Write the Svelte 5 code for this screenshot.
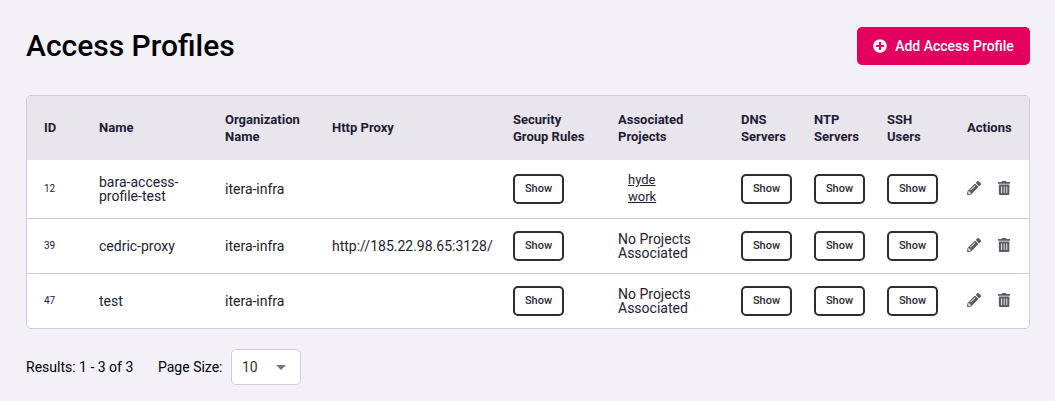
<script>
  const headers = [
    ['ID'],
    ['Name'],
    ['Organization', 'Name'],
    ['Http Proxy'],
    ['Security', 'Group Rules'],
    ['Associated', 'Projects'],
    ['DNS', 'Servers'],
    ['NTP', 'Servers'],
    ['SSH', 'Users'],
    ['Actions'],
  ];
  const rows = [
    { id: 12, name: 'bara-access-profile-test', org: 'itera-infra', proxy: '', projects: ['hyde', 'work'] },
    { id: 39, name: 'cedric-proxy', org: 'itera-infra', proxy: 'http://185.22.98.65:3128/', projects: [] },
    { id: 47, name: 'test', org: 'itera-infra', proxy: '', projects: [] },
  ];
</script>

<main>
  <header>
    <h1>Access Profiles</h1>
    <button class="add">
      <svg width="14" height="14" viewBox="0 0 512 512"><path fill="currentColor" d="M256 8C119 8 8 119 8 256s111 248 248 248 248-111 248-248S393 8 256 8zm144 276c0 6.600-5.400 12-12 12h-92v92c0 6.600-5.400 12-12 12h-56c-6.600 0-12-5.400-12-12v-92h-92c-6.600 0-12-5.400-12-12v-56c0-6.600 5.400-12 12-12h92v-92c0-6.600 5.400-12 12-12h56c6.600 0 12 5.400 12 12v92h92c6.600 0 12 5.400 12 12v56z" /></svg>
      <span>Add Access Profile</span>
    </button>
  </header>

  <section class="table">
    <div class="row head">
      {#each headers as lines}
        <div class:single={lines.length === 1}>{#each lines as line}<span class="line">{line}</span>{/each}</div>
      {/each}
    </div>
    {#each rows as row}
      <div class="row body">
        <div class="id">{row.id}</div>
        <div class="name">{row.name}</div>
        <div>{row.org}</div>
        <div>{row.proxy}</div>
        <div><button class="show">Show</button></div>
        {#if row.projects.length}
          <div class="links">
            {#each row.projects as project}<span class="link">{project}</span>{/each}
          </div>
        {:else}
          <div class="none">No Projects Associated</div>
        {/if}
        <div><button class="show">Show</button></div>
        <div><button class="show">Show</button></div>
        <div><button class="show">Show</button></div>
        <div class="actions">
          <svg width="14" height="14" viewBox="0 0 512 512"><path fill="currentColor" d="M497.900 142.100l-46.100 46.100c-4.700 4.700-12.300 4.700-17 0l-111-111c-4.700-4.700-4.700-12.300 0-17l46.100-46.100c18.700-18.700 49.100-18.700 67.900 0l60.100 60.100c18.800 18.700 18.800 49.100 0 67.900zM284.200 99.800L21.600 362.400.4 483.900c-2.900 16.400 11.400 30.600 27.800 27.800l121.500-21.300 262.600-262.600c4.700-4.700 4.700-12.300 0-17l-111-111c-4.800-4.700-12.400-4.700-17.100 0zM124.100 339.900c-5.500-5.500-5.500-14.300 0-19.800l154-154c5.500-5.500 14.300-5.500 19.800 0s5.500 14.300 0 19.800l-154 154c-5.500 5.500-14.300 5.500-19.800 0zM88 424h48v36.300l-64.500 11.300-31.100-31.100L51.700 376H88v48z" /></svg>
          <svg width="12.250" height="14" viewBox="0 0 448 512"><path fill="currentColor" d="M32 464a48 48 0 0 0 48 48h288a48 48 0 0 0 48-48V128H32zm272-256a16 16 0 0 1 32 0v224a16 16 0 0 1-32 0zm-96 0a16 16 0 0 1 32 0v224a16 16 0 0 1-32 0zm-96 0a16 16 0 0 1 32 0v224a16 16 0 0 1-32 0zM432 32H312l-9.400-18.700A24 24 0 0 0 281.100 0H166.800a23.720 23.720 0 0 0-21.400 13.300L136 32H16A16 16 0 0 0 0 48v32a16 16 0 0 0 16 16h416a16 16 0 0 0 16-16V48a16 16 0 0 0-16-16z" /></svg>
        </div>
      </div>
    {/each}
  </section>

  <footer>
    <span class="results">Results: 1 - 3 of 3</span>
    <span class="size">Page Size:</span>
    <div class="select"><span>10</span><i></i></div>
  </footer>
</main>

<style>
  :global(body) {
    background: #f3f0f8;
  }
  main {
    box-sizing: border-box;
    height: 401px;
    padding: 27px 25px 0 26px;
    background: #f3f0f8;
    font-family: Roboto, sans-serif;
    font-size: 14px;
    color: #231b33;
  }
  header {
    display: flex;
    justify-content: space-between;
    height: 38px;
    margin-bottom: 30px;
  }
  h1 {
    margin: 0;
    font-size: 30px;
    font-weight: 500;
    line-height: 38px;
    color: #000;
  }
  button {
    box-sizing: border-box;
    font-family: inherit;
    font-weight: 500;
  }
  .add {
    display: flex;
    align-items: center;
    justify-content: center;
    gap: 8px;
    width: 173px;
    padding: 0;
    border: 0;
    border-radius: 5px;
    background: #e3005f;
    color: #fff;
    font-size: 14px;
  }
  .table {
    border: 1px solid #cfccdb;
    border-radius: 5px;
    background: #fff;
    overflow: hidden;
  }
  .row {
    display: grid;
    grid-template-columns: 55px 126px 107px 181px 105px 123px 73px 73px 80px 1fr;
    align-items: center;
    box-sizing: border-box;
    padding-left: 17px;
  }
  .head {
    height: 64px;
    background: #e8e5ed;
    font-size: 13px;
    font-weight: 700;
    line-height: 17px;
  }
  .single {
    padding-bottom: 1px;
  }
  .line {
    display: block;
  }
  .body {
    height: 55px;
    line-height: 14px;
    border-bottom: 1px solid #cfccdf;
  }
  .body:nth-child(2) {
    height: 59px;
  }
  .body:last-child {
    height: 54px;
    border-bottom: 0;
  }
  .id {
    font-size: 10px;
  }
  .name {
    width: 90px;
  }
  .none {
    width: 90px;
  }
  .show {
    display: block;
    width: 51px;
    height: 30px;
    padding: 0 0 2px;
    border: 2px solid #2b2f2f;
    border-radius: 5px;
    background: #fff;
    color: #2b2a33;
    font-size: 11px;
  }
  .links {
    padding: 0 0 2px 10px;
    font-size: 13px;
    line-height: 17px;
  }
  .link {
    display: block;
    text-decoration: underline;
  }
  .actions {
    display: flex;
    gap: 17px;
    padding-bottom: 2px;
    color: #5b5d64;
  }
  svg {
    display: block;
  }
  footer {
    display: flex;
    align-items: center;
    margin-top: 20px;
    color: #000;
  }
  .results {
    width: 132px;
  }
  .size {
    width: 73px;
  }
  .select {
    display: flex;
    align-items: center;
    justify-content: space-between;
    box-sizing: border-box;
    width: 70px;
    height: 36px;
    padding: 0 14px 0 10px;
    border: 1px solid #cfccdf;
    border-radius: 5px;
    background: #fff;
    color: #333;
  }
  .select i {
    border: 5px solid transparent;
    border-top-color: #757575;
    border-bottom: 0;
  }
</style>
